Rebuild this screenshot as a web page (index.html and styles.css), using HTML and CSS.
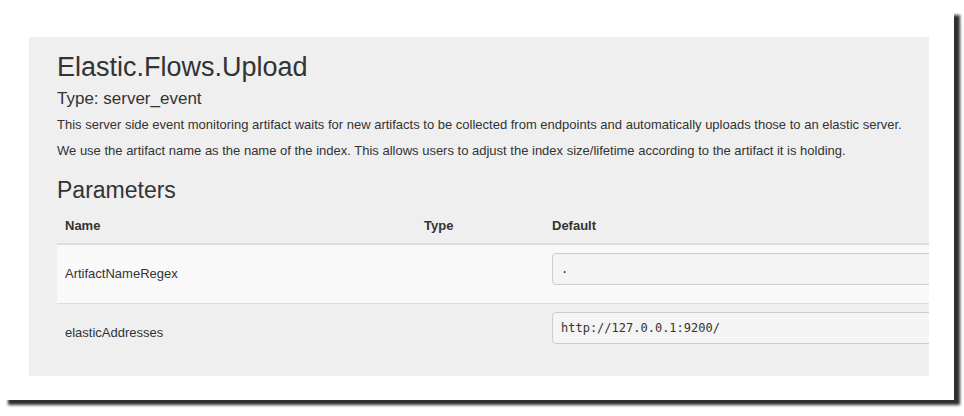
FILE: index.html
```html
<!DOCTYPE html>
<html>
<head>
<meta charset="utf-8">
<link rel="stylesheet" href="styles.css">
</head>
<body>
<div class="window">
  <div class="panel">
    <h1 class="title">Elastic.Flows.Upload</h1>
    <h4 class="type">Type: server_event</h4>
    <p class="desc">This server side event monitoring artifact waits for new artifacts to be collected from endpoints and automatically uploads those to an elastic server.</p>
    <p class="desc">We use the artifact name as the name of the index. This allows users to adjust the index size/lifetime according to the artifact it is holding.</p>
    <h3 class="params">Parameters</h3>
    <table class="table">
      <thead>
        <tr>
          <th class="col-name">Name</th>
          <th class="col-type">Type</th>
          <th>Default</th>
        </tr>
      </thead>
      <tbody>
        <tr class="striped">
          <td>ArtifactNameRegex</td>
          <td></td>
          <td><div class="input">.</div></td>
        </tr>
        <tr>
          <td>elasticAddresses</td>
          <td></td>
          <td><div class="input">http://127.0.0.1:9200/</div></td>
        </tr>
      </tbody>
    </table>
  </div>
</div>
</body>
</html>
```
FILE: styles.css
```css
html {
  margin: 0;
  padding: 0;
  background: #fff;
}
body {
  margin: 0;
  padding: 0;
  width: 964px;
  height: 416px;
  overflow: hidden;
  font-family: "Liberation Sans", Arial, sans-serif;
  color: #333;
}
.window {
  position: relative;
  width: 954px;
  height: 400px;
  background: #fff;
  padding-top: 37px;
  box-sizing: border-box;
}
.window::before {
  content: "";
  position: absolute;
  left: 8px;
  top: 15px;
  right: -6px;
  bottom: -5px;
  background: #2e2e2e;
  filter: blur(1.5px);
  z-index: -1;
}
.panel {
  margin-left: 29px;
  width: 900px;
  height: 339px;
  box-sizing: border-box;
  background: #efefef;
  padding: 14px 0 14px 28px;
  overflow: hidden;
}
.title {
  margin: 0;
  font-size: 27px;
  line-height: 32px;
  font-weight: normal;
}
.type {
  margin: 6px 0 0;
  font-size: 17px;
  line-height: 20px;
  font-weight: normal;
}
.desc {
  margin: 7px 0 0;
  font-size: 13px;
  line-height: 18px;
}
.desc + .desc {
  margin-top: 8px;
}
.params {
  margin: 16px 0 0;
  font-size: 23px;
  line-height: 28px;
  font-weight: normal;
}
.table {
  margin-top: 5px;
  width: 872px;
  border-collapse: collapse;
  font-size: 13px;
  line-height: 18px;
  table-layout: fixed;
}
.table th {
  text-align: left;
  font-weight: bold;
  padding: 8px;
  border-bottom: 2px solid #ddd;
  vertical-align: bottom;
}
.col-name { width: 343px; }
.col-type { width: 112px; }
.table td {
  padding: 8px;
  vertical-align: middle;
}
.table tbody tr.striped td {
  background: #f9f9f9;
  border-bottom: 1px solid #ddd;
}
.input {
  box-sizing: border-box;
  height: 32px;
  width: calc(100% + 30px);
  margin-bottom: 10px;
  border: 1px solid #ccc;
  border-radius: 4px;
  background: #f4f4f4;
  padding: 6px 8px;
  font-family: "DejaVu Sans Mono", monospace;
  font-size: 12px;
  line-height: 18px;
  color: #333;
}
```
